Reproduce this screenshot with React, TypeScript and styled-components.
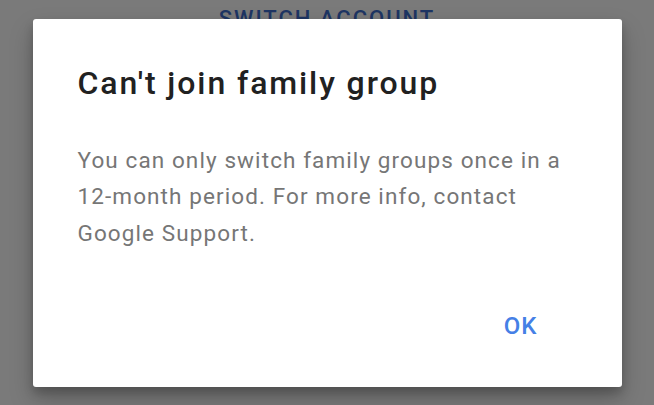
import React from "react";
import styled, { createGlobalStyle } from "styled-components";

const GlobalStyle = createGlobalStyle`
  html, body {
    margin: 0;
    padding: 0;
    width: 100%;
    height: 100%;
    overflow: hidden;
  }
  body {
    font-family: Roboto, "Noto Sans", Arial, sans-serif;
  }
  #root {
    height: 100%;
  }
`;

const Page = styled.div`
  position: relative;
  width: 654px;
  height: 405px;
  background: #ffffff;
  display: flex;
  flex-direction: column;
  align-items: center;
`;

const TextButton = styled.button`
  border: none;
  background: none;
  padding: 0;
  margin: 0;
  font-family: Roboto, Arial, sans-serif;
  font-weight: 500;
  cursor: pointer;
  color: #4580e6;
`;

const PageAction = styled(TextButton)`
  margin-top: 6px;
  font-size: 22px;
  line-height: 26px;
  letter-spacing: 2px;
  color: #3f6fd0;
`;

const Scrim = styled.div`
  position: absolute;
  inset: 0;
  background: rgba(0, 0, 0, 0.52);
  display: flex;
  align-items: center;
  justify-content: center;
`;

const Dialog = styled.div`
  width: 589px;
  height: 368px;
  box-sizing: border-box;
  background: #ffffff;
  border-radius: 3px;
  box-shadow: 0 12px 24px rgba(0, 0, 0, 0.22), 0 6px 10px rgba(0, 0, 0, 0.18);
  padding: 46px 45px 0 45px;
  display: flex;
  flex-direction: column;
`;

const Title = styled.h2`
  margin: 0;
  font-family: Roboto, Arial, sans-serif;
  font-weight: 500;
  font-size: 32px;
  line-height: 36px;
  letter-spacing: 1.9px;
  color: #212121;
`;

const Body = styled.p`
  margin: 41px 0 0 0;
  font-family: Roboto, Arial, sans-serif;
  font-weight: 400;
  font-size: 22.5px;
  line-height: 36.5px;
  letter-spacing: 1.1px;
  color: #767676;
`;

const Actions = styled.div`
  display: flex;
  justify-content: flex-end;
  margin-top: auto;
  padding: 0 39px 49px 0;
`;

const DialogAction = styled(TextButton)`
  font-size: 24px;
  line-height: 24px;
  letter-spacing: 1px;
`;

export default function App() {
  return (
    <>
      <GlobalStyle />
      <Page>
        <PageAction>SWITCH ACCOUNT</PageAction>
        <Scrim>
          <Dialog role="dialog">
            <Title>Can't join family group</Title>
            <Body>
              You can only switch family groups once in a 12-month period. For
              more info, contact Google Support.
            </Body>
            <Actions>
              <DialogAction>OK</DialogAction>
            </Actions>
          </Dialog>
        </Scrim>
      </Page>
    </>
  );
}
